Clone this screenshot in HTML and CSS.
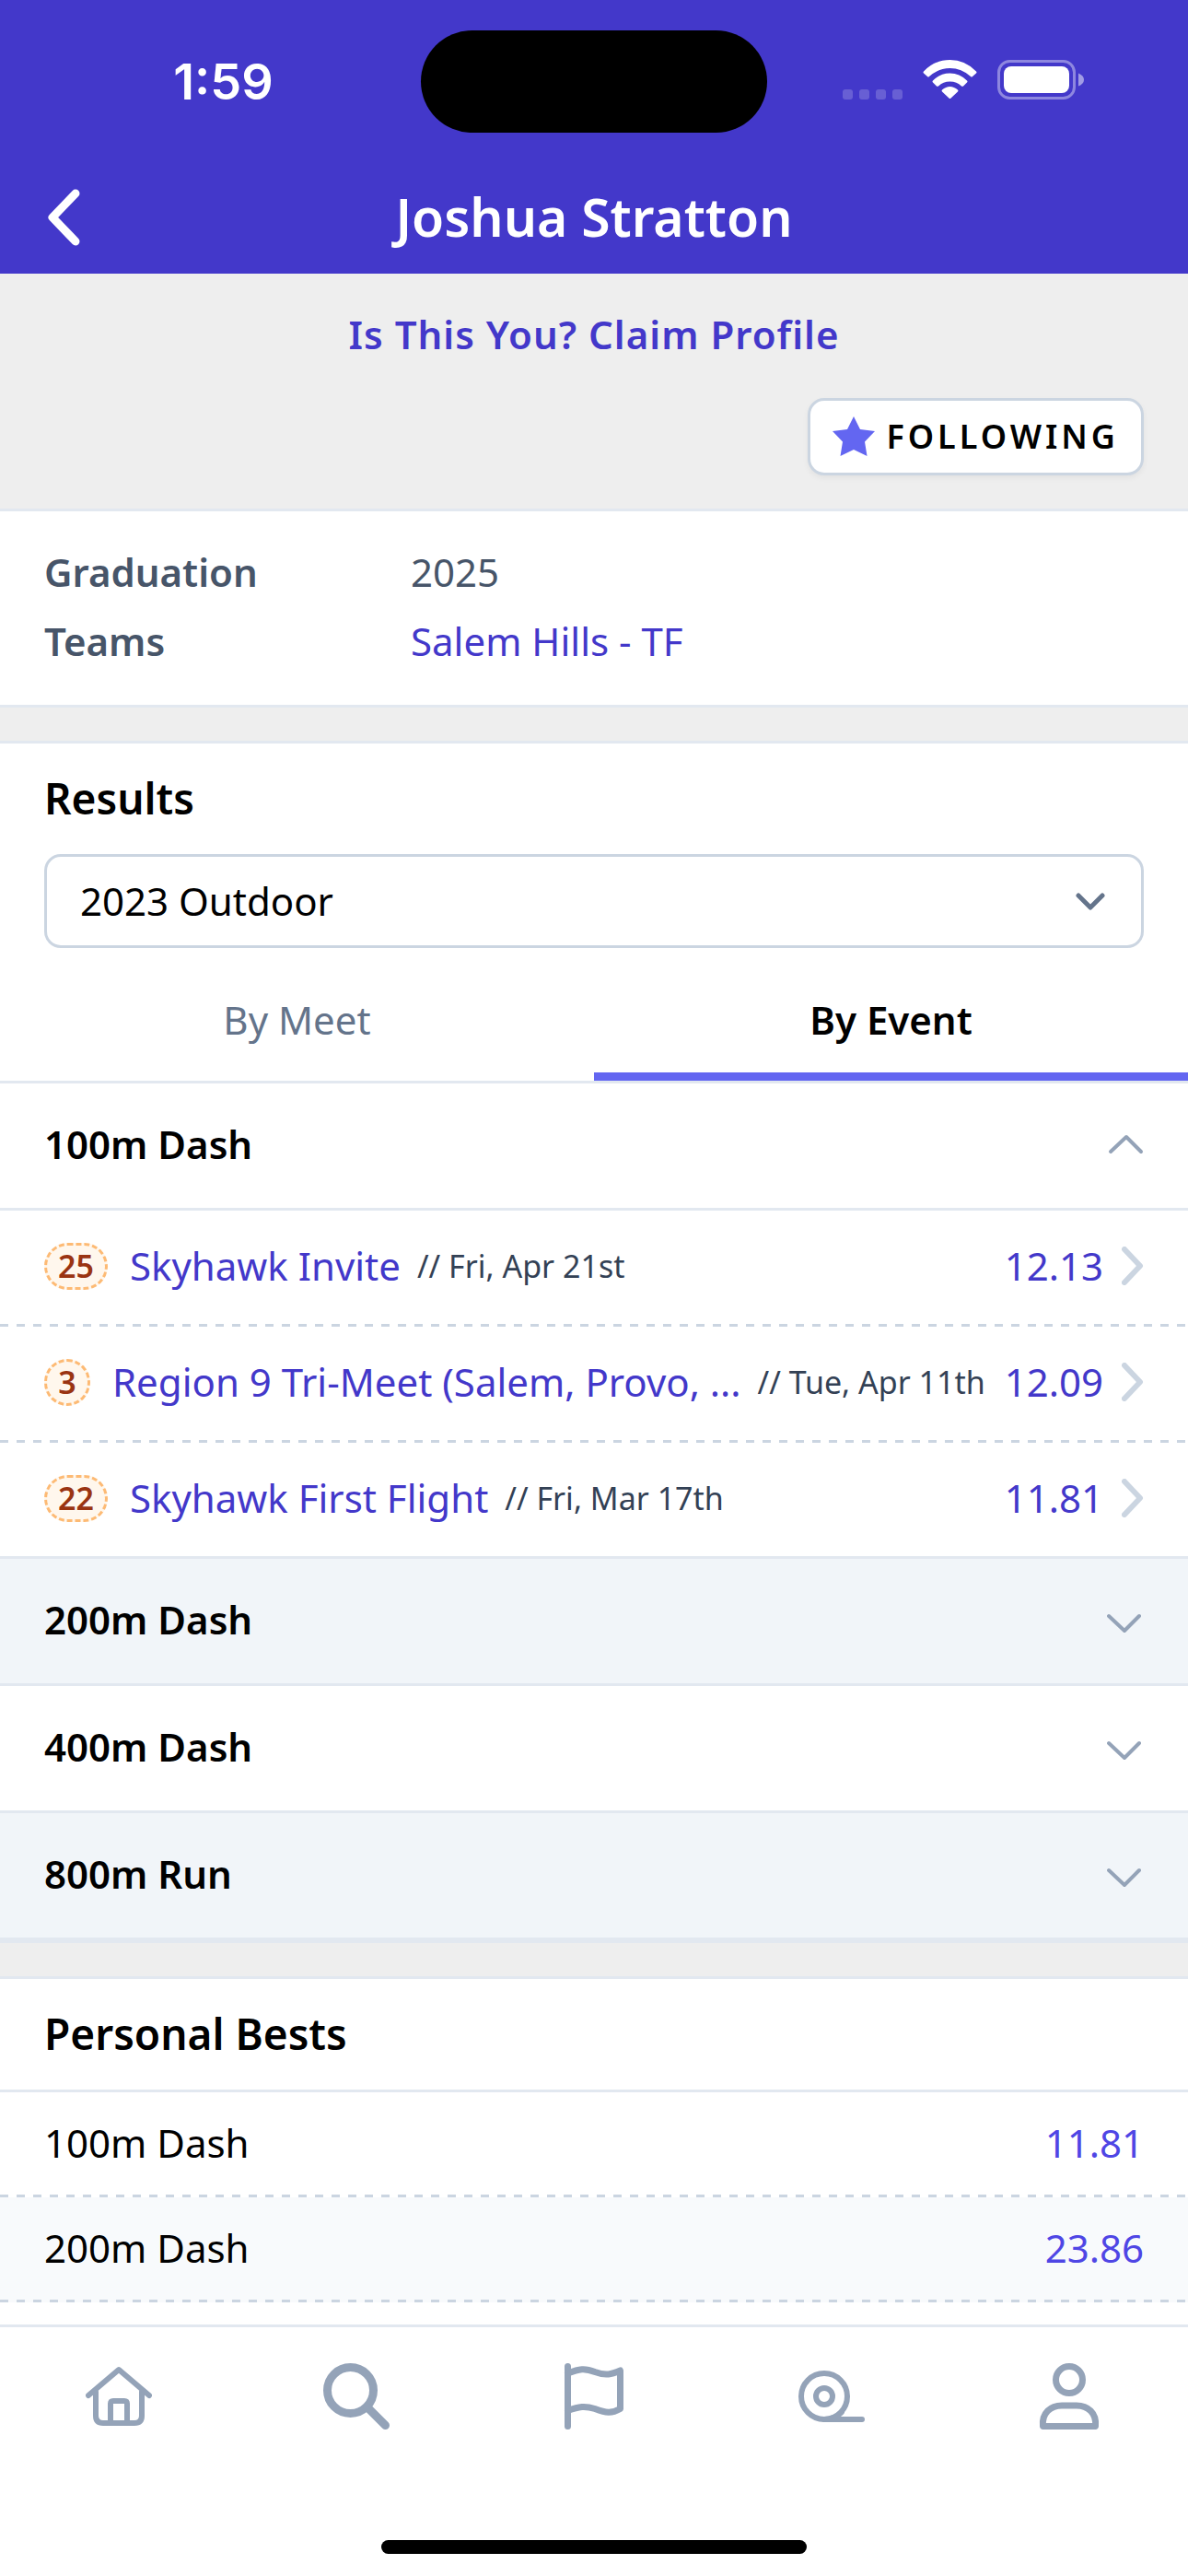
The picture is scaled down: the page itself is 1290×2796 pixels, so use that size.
FILE: index.html
```html
<!DOCTYPE html>
<html lang="en">
	<head>
		<meta charset="UTF-8">
		<meta name="viewport" content="width=device-width">
		<title>Joshua Stratton</title>
		<link rel="stylesheet" href="styles.css">
	</head>
	<body>
		<header class="header">
			<div class="status">
				<div class="time">1:59</div>
				<div class="island"></div>
				<svg class="signal" width="262" height="48" viewBox="0 0 262 48">
					<g fill="#fff" fill-opacity="0.2">
						<rect x="0" y="32" width="11" height="11" rx="3"/>
						<rect x="18" y="32" width="11" height="11" rx="3"/>
						<rect x="36" y="32" width="11" height="11" rx="3"/>
						<rect x="54" y="32" width="11" height="11" rx="3"/>
					</g>
					<!-- wifi -->
					<g fill="#fff">
						<path d="M88 12.500Q100 0 116.500 0T145 12.500Q146 13.500 145 14.500L141 18Q140 19 139 18Q129 9 116.500 9T94 18Q93 19 92 18L88 14.500Q87 13.500 88 12.500Z"/>
						<path d="M98 22.500Q106 14.500 116.500 14.500T135 22.500Q136 23.500 135 24.500L131 28.500Q130 29 129 28.500Q124 23.500 116.500 23.500T104 28.500Q103 29 102 28.500L98 24.500Q97 23.500 98 22.500Z"/>
						<path d="M108 32.500Q112 29 116.500 29T125 32.500Q126 33.500 125 34.500L117.500 41.500Q116.500 42.500 115.500 41.500L108 34.500Q107 33.500 108 32.500Z"/>
					</g>
					<!-- battery -->
					<rect x="169.500" y="1.500" width="82" height="40" rx="12" fill="none" stroke="#fff" stroke-opacity="0.4" stroke-width="3"/>
					<rect x="175" y="7" width="71" height="29" rx="8" fill="#fff"/>
					<path d="M256 14.500Q262 17 262 21.500T256 28.500Z" fill="#fff" fill-opacity="0.5"/>
				</svg>
			</div>
			<div class="titlebar">
				<button class="back" type="button" aria-label="Back">
					<svg width="40" height="62" viewBox="0 0 40 62"><path d="M34 5L9 31L34 57"/></svg>
				</button>
				<h1>Joshua Stratton</h1>
			</div>
		</header>

		<main>
			<section class="claim">
				<a href="#">Is This You? Claim Profile</a>
				<button class="following" type="button">
					<svg width="46" height="44" viewBox="0 0 46 44"><path d="M23 0L30 14L46 16L35 27.500L37.500 43L23 36L8.500 43L11 27.500L0 16L16 14Z"/></svg>
					FOLLOWING
				</button>
			</section>

			<dl class="info">
				<dt>Graduation</dt>
				<dd>2025</dd>
				<dt>Teams</dt>
				<dd><a href="#">Salem Hills - TF</a></dd>
			</dl>

			<section class="results">
				<h2><label for="season">Results</label></h2>
				<div class="season">
					<select id="season">
						<option>2023 Outdoor</option>
					</select>
					<svg width="32" height="20" viewBox="0 0 32 20"><path d="M3 3L16 16L29 3"/></svg>
				</div>
				<div class="tabs" role="tablist">
					<button type="button" role="tab" aria-selected="false">By Meet</button>
					<button class="active" type="button" role="tab" aria-selected="true">By Event</button>
				</div>

				<button class="event" type="button">
					100m Dash
					<svg width="40" height="22" viewBox="0 0 40 22"><path d="M4 19L21 3L37 19"/></svg>
				</button>
				<ul class="meets">
					<li>
						<a href="#">
							<span class="place">25</span>
							<span class="name">Skyhawk Invite</span>
							<span class="date">// Fri, Apr 21st</span>
							<span class="mark">12.13</span>
							<svg width="24" height="42" viewBox="0 0 24 42"><path d="M3 3L20 21L3 39"/></svg>
						</a>
					</li>
					<li>
						<a href="#">
							<span class="place">3</span>
							<span class="name">Region 9 Tri-Meet (Salem, Provo, ...</span>
							<span class="date">// Tue, Apr 11th</span>
							<span class="mark">12.09</span>
							<svg width="24" height="42" viewBox="0 0 24 42"><path d="M3 3L20 21L3 39"/></svg>
						</a>
					</li>
					<li>
						<a href="#">
							<span class="place">22</span>
							<span class="name">Skyhawk First Flight</span>
							<span class="date">// Fri, Mar 17th</span>
							<span class="mark">11.81</span>
							<svg width="24" height="42" viewBox="0 0 24 42"><path d="M3 3L20 21L3 39"/></svg>
						</a>
					</li>
				</ul>
				<button class="event shaded" type="button">
					200m Dash
					<svg width="40" height="30" viewBox="0 0 40 30"><path d="M2 11L19 27L35 11"/></svg>
				</button>
				<button class="event" type="button">
					400m Dash
					<svg width="40" height="30" viewBox="0 0 40 30"><path d="M2 11L19 27L35 11"/></svg>
				</button>
				<button class="event shaded" type="button">
					800m Run
					<svg width="40" height="30" viewBox="0 0 40 30"><path d="M2 11L19 27L35 11"/></svg>
				</button>
			</section>

			<section class="bests">
				<h2 id="bests">Personal Bests</h2>
				<table aria-labelledby="bests">
					<tr>
						<th scope="row">100m Dash</th>
						<td><a href="#">11.81</a></td>
					</tr>
					<tr>
						<th scope="row">200m Dash</th>
						<td><a href="#">23.86</a></td>
					</tr>
				</table>
			</section>
		</main>

		<nav class="tabbar">
			<div class="links">
				<a href="#" aria-label="Home">
					<svg viewBox="0 0 72 72" stroke-width="6">
						<path d="M3 35L36 7L69 35M11 31V57Q11 65 19 65H53Q61 65 61 57V31M27 65V44Q27 41 30 41H42Q45 41 45 44V65"/>
					</svg>
				</a>
				<a href="#" aria-label="Search">
					<svg viewBox="0 0 72 72" stroke-width="9">
						<circle cx="29.500" cy="29.500" r="25"/>
						<path d="M48 48L67.500 67.500"/>
					</svg>
				</a>
				<a href="#" aria-label="Meets">
					<svg viewBox="0 0 72 72" stroke-width="7">
						<path d="M7.500 3.500V68.500M7.500 11C20 6 26 5 37 9.500C49 14 55 12 64.500 8V49.500C55 55 49 54 37 49.500C26 46 20 47 7.500 51.500"/>
					</svg>
				</a>
				<a href="#" aria-label="Feed">
					<svg viewBox="0 0 72 72" stroke-width="6">
						<circle cx="28" cy="36" r="25"/>
						<circle cx="28" cy="36" r="9"/>
						<path d="M28 61H69M28 61Q40 61 47 53"/>
					</svg>
				</a>
				<a href="#" aria-label="Account">
					<svg viewBox="0 0 72 72" stroke-width="7">
						<circle cx="36" cy="18" r="14.500"/>
						<path d="M7.500 68.500C6 54 16 46 28 46H44C56 46 66 54 64.500 68.500Z"/>
					</svg>
				</a>
			</div>
			<div class="handle"></div>
		</nav>
	</body>
</html>
```

FILE: styles.css
```css
* {margin: 0; padding: 0; box-sizing: border-box;}
ul {list-style: none;}
a {color: #4338ca; text-decoration: none;}
button, select {font: inherit; color: inherit; background: none; border: none; cursor: pointer;}
svg {fill: none; stroke-linecap: round; stroke-linejoin: round; flex: none; display: block;}

body {
	font-family: "Noto Sans", "Open Sans", sans-serif;
	font-size: 42px;
	line-height: 60px;
	color: #000;
	background: #fff;
	min-height: 100vh;
	display: flex;
	flex-direction: column;
}
main {flex: 1;}

/* header */
.header {
	background: #4338ca;
	color: #fff;
}
.status {
	display: grid;
	grid-template-columns: 1fr 376px 1fr;
	align-items: center;
	padding-top: 33px;
}
.time {
	font-family: Inter, sans-serif;
	font-size: 54px;
	font-weight: 600;
	text-align: center;
	padding-left: 28px;
}
.island {
	height: 111px;
	border-radius: 56px;
	background: #000;
}
.signal {
	justify-self: center;
	margin-right: 32px;
}
.titlebar {
	display: grid;
	grid-template-columns: 86px 1fr 86px;
	align-items: center;
	padding: 54px 48px 24px;
}
.back svg {stroke: #fff; stroke-width: 9;}
.titlebar h1 {
	font-size: 57px;
	line-height: 75px;
	font-weight: 600;
	text-align: center;
}

/* claim + follow */
.claim {
	background: #eee;
	border-bottom: 3px solid #e2e8f0;
	padding: 36px 48px;
	display: flex;
	flex-direction: column;
	align-items: center;
	gap: 39px;
}
.claim a {
	font-weight: 600;
	letter-spacing: 1px;
}
.following {
	align-self: flex-end;
	display: flex;
	align-items: center;
	gap: 12px;
	height: 84px;
	padding: 0 24px;
	background: #fff;
	border: 3px solid #cbd5e1;
	border-radius: 18px;
	box-shadow: 0 3px 6px rgba(0, 0, 0, 0.05);
	font-size: 36px;
	font-weight: 600;
	letter-spacing: 4px;
}
.following svg {fill: #6366f1;}

/* info */
.info {
	display: grid;
	grid-template-columns: 1fr 2fr;
	row-gap: 15px;
	padding: 36px 48px 39px;
	color: #475569;
}
.info dt {font-weight: 600;}

/* results */
.results, .bests {
	border-top: 3px solid #e2e8f0;
}
.results::before, .bests::before {
	content: "";
	display: block;
	height: 36px;
	background: #eee;
	border-bottom: 3px solid #e2e8f0;
}
h2 {
	font-size: 46px;
	font-weight: 600;
	padding: 29px 48px 31px;
}
.season {
	position: relative;
	margin: 0 48px;
}
.season select {
	appearance: none;
	display: block;
	width: 100%;
	height: 102px;
	padding: 0 36px;
	border: 3px solid #cbd5e1;
	border-radius: 18px;
}
.season svg {
	position: absolute;
	right: 42px;
	top: 42px;
	stroke: #64748b;
	stroke-width: 5;
	pointer-events: none;
}
.tabs {
	display: grid;
	grid-template-columns: 1fr 1fr;
	margin-top: 24px;
}
.tabs button {
	padding: 24px 0 27px;
	border-bottom: 9px solid transparent;
	color: #64748b;
}
.tabs .active {
	color: #000;
	font-weight: 600;
	border-color: #6366f1;
}
.event {
	display: flex;
	align-items: center;
	justify-content: space-between;
	width: 100%;
	height: 138px;
	padding: 0 48px 4px;
	border-top: 3px solid #e2e8f0;
	font-weight: 600;
}
.event svg {stroke: #94a3b8; stroke-width: 4;}
.shaded {background: #f1f5f9;}
.event:last-child {
	height: 141px;
	border-bottom: 3px solid #e2e8f0;
}

.meets {border-top: 3px solid #e2e8f0;}
.meets li + li {
	padding-top: 3px;
	background: repeating-linear-gradient(90deg, #cbd5e1 0 9px, transparent 9px 18px) top / 100% 3px no-repeat;
}
.meets a {
	display: flex;
	align-items: center;
	height: 123px;
	padding: 0 48px 3px;
	white-space: nowrap;
}
.place {
	flex: none;
	min-width: 50px;
	height: 51px;
	line-height: 45px;
	padding: 0 12px;
	margin-right: 24px;
	border: 3px dashed #fdba74;
	border-radius: 26px;
	background: #fff7ed;
	color: #9a3412;
	font-size: 34px;
	font-weight: 600;
	text-align: center;
}
.date {
	margin-left: 18px;
	font-size: 34px;
	color: #334155;
}
.mark {margin-left: auto;}
.meets svg {
	margin-left: 20px;
	stroke: #cbd5e1;
	stroke-width: 6;
}

/* personal bests */
.bests table {
	width: 100%;
	border-collapse: separate;
	border-spacing: 0;
	border-top: 3px solid #e2e8f0;
}
.bests tr {
	height: 114px;
	background: repeating-linear-gradient(90deg, #cbd5e1 0 9px, transparent 9px 18px) bottom / 100% 3px no-repeat;
}
.bests tr:nth-child(even) {background-color: #f8fafc;}
.bests th {
	text-align: left;
	font-weight: 400;
	padding: 0 0 4px 48px;
}
.bests td {
	text-align: right;
	padding: 0 48px 4px 0;
}
.bests td a {color: #4f46e5;}

/* bottom bar */
.tabbar {
	background: #fff;
	border-top: 3px solid #e2e8f0;
	padding-bottom: 24px;
}
.links {
	display: grid;
	grid-template-columns: repeat(5, 1fr);
	padding: 39px 0 120px;
}
.links a {
	display: flex;
	justify-content: center;
}
.links svg {
	width: 72px;
	height: 72px;
	stroke: #94a3b8;
}
.handle {
	width: 462px;
	height: 15px;
	margin: 0 auto;
	border-radius: 8px;
	background: #000;
}
```
